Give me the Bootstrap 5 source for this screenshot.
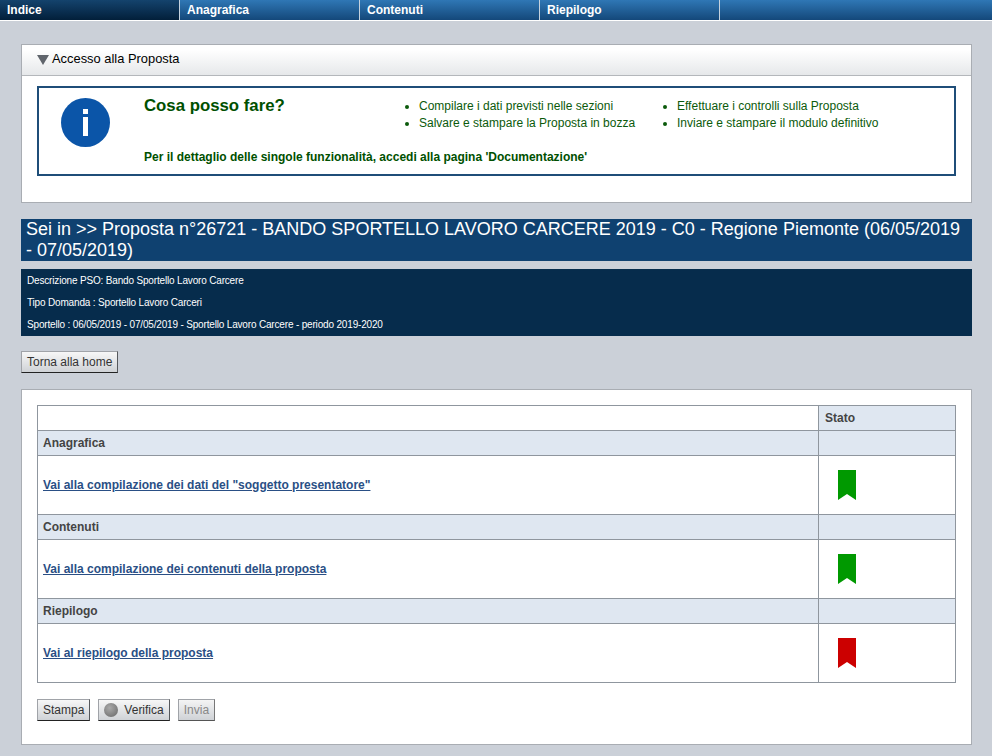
<!DOCTYPE html>
<html lang="it">
<head>
  <meta charset="UTF-8">
  <title>Indice</title>
  <link href="https://cdn.jsdelivr.net/npm/bootstrap@5.3.3/dist/css/bootstrap.min.css" rel="stylesheet">
  <style>
    body {
      background-color: #cbd0d8;
      font-family: "Liberation Sans", Arial, sans-serif;
      font-size: 12px;
      color: #333;
    }
    .top-menu {
      height: 21px;
      border-bottom: 1px solid #fff;
      background: linear-gradient(#2f77b5, #14487a);
    }
    .top-item {
      width: 180px;
      height: 20px;
      padding: 2px 0 0 7px;
      border-right: 1px solid #c5d2de;
      color: #fff;
      font-size: 12px;
      font-weight: 700;
      line-height: 16px;
      text-decoration: none;
    }
    .top-item.current {
      background: linear-gradient(#14436d, #021f3a);
    }
    .page-wrap {
      padding: 23px 20px 0 21px;
    }
    .white-panel {
      background: #fff;
      border: 1px solid #a9adb3;
      border-radius: 0;
    }
    .panel-head {
      height: 31px;
      padding: 0 15px 1px;
      border-bottom: 1px solid #b4b7bb;
      background: linear-gradient(#fff 15%, #e6e8ea);
      color: #000;
      font-size: 12.9px;
      line-height: 1;
    }
    .head-arrow {
      width: 12px;
      height: 10px;
      margin-right: 3px;
      fill: #60656c;
    }
    .info-box {
      height: 90px;
      margin: 10px 15px 26px;
      border: 2px solid #1f4e79;
      color: #0b5a0b;
    }
    .info-icon {
      width: 49px;
      height: 49px;
      margin: 10px 0 0 22px;
    }
    .info-body {
      margin-left: 34px;
      padding-top: 8px;
    }
    .info-title {
      width: 260px;
      height: 43px;
      margin: 0;
      color: #005000;
      font-size: 16.8px;
      font-weight: 700;
      line-height: 19px;
    }
    .info-list {
      margin: 2px 0 0;
      padding-left: 0;
      line-height: 17px;
      list-style: none;
    }
    .info-list li {
      position: relative;
      padding-left: 15px;
    }
    .info-list li::before {
      content: "";
      position: absolute;
      top: 7px;
      left: 1px;
      width: 4px;
      height: 4px;
      border-radius: 50%;
      background: #0b5a0b;
    }
    .list-one {
      width: 258px;
    }
    .info-note {
      margin: 9px 0 0;
      color: #005000;
      font-weight: 700;
    }
    .where-bar {
      margin-top: 16px;
      padding: 0 5px;
      background: #0f4170;
      color: #fff;
      font-size: 18px;
      line-height: 21px;
    }
    .detail-box {
      height: 67px;
      margin-top: 8px;
      padding: 5px 6px 0;
      background: #062c4c;
      color: #fff;
      font-size: 10px;
      letter-spacing: -.17px;
    }
    .detail-box p {
      height: 22px;
      margin: 0;
      line-height: 14px;
    }
    .plain-btn {
      height: 22px;
      padding: 0 5px;
      border: 1px solid #a0a3a8;
      border-right-color: #55585c;
      border-bottom-color: #222;
      border-radius: 0;
      background: linear-gradient(#f7f7f7, #cfd2d6);
      color: #333;
      font-size: 12px;
      line-height: 18px;
    }
    .plain-btn:disabled {
      border-color: #a0a3a8;
      border-right-color: #777;
      border-bottom-color: #555;
      background: linear-gradient(#f4f4f4, #cfd2d6);
      color: #888;
      opacity: 1;
    }
    .home-row {
      margin: 15px 0 16px;
    }
    .status-table {
      width: 919px;
      margin: 15px 15px 16px;
      border-collapse: collapse;
      table-layout: fixed;
    }
    .status-table td,
    .status-table th {
      padding: 0 5px;
      border: 1px solid #8f969e;
      color: #444;
      font-size: 12px;
      vertical-align: middle;
    }
    .status-table .col-stato {
      width: 137px;
      padding-left: 6px;
    }
    .status-table .head-row {
      height: 25px;
    }
    .status-table .head-row th:last-child,
    .status-table .group-row td {
      background: #dfe7f1;
    }
    .status-table .group-row {
      height: 25px;
    }
    .status-table .group-row td {
      font-weight: 700;
    }
    .status-table .link-row {
      height: 59px;
    }
    .status-table a {
      color: #2a4f85;
      font-weight: 700;
    }
    .flag-icon {
      display: block;
      width: 18px;
      height: 30px;
      margin-left: 14px;
    }
    .action-row {
      margin: 0 15px 23px;
    }
    .grey-dot {
      display: inline-block;
      width: 14px;
      height: 14px;
      margin-right: 6px;
      border-radius: 50%;
      background: radial-gradient(circle at 40% 35%, #aaa, #666);
      vertical-align: -3px;
    }
  </style>
</head>
<body>

  <nav class="top-menu d-flex">
    <a class="top-item current" href="#">Indice</a>
    <a class="top-item" href="#">Anagrafica</a>
    <a class="top-item" href="#">Contenuti</a>
    <a class="top-item" href="#">Riepilogo</a>
  </nav>

  <div class="page-wrap">
    <section class="white-panel">
      <div class="panel-head d-flex align-items-center">
        <svg class="head-arrow" viewBox="0 0 12 10"><path d="M0 0H12L6 10Z"/></svg>
        Accesso alla Proposta
      </div>
      <div class="info-box d-flex">
        <svg class="info-icon flex-shrink-0" viewBox="0 0 49 49">
          <circle cx="24.5" cy="24.5" r="24.5" fill="#0b55a8"/>
          <rect x="22" y="11" width="5" height="5" fill="#fff"/>
          <rect x="22" y="19" width="5" height="19" fill="#fff"/>
        </svg>
        <div class="info-body">
          <div class="d-flex">
            <h2 class="info-title">Cosa posso fare?</h2>
            <ul class="info-list list-one">
              <li>Compilare i dati previsti nelle sezioni</li>
              <li>Salvare e stampare la Proposta in bozza</li>
            </ul>
            <ul class="info-list">
              <li>Effettuare i controlli sulla Proposta</li>
              <li>Inviare e stampare il modulo definitivo</li>
            </ul>
          </div>
          <p class="info-note">Per il dettaglio delle singole funzionalità, accedi alla pagina 'Documentazione'</p>
        </div>
      </div>
    </section>

    <div class="where-bar">Sei in &gt;&gt; Proposta n°26721 - BANDO SPORTELLO LAVORO CARCERE 2019 - C0 - Regione Piemonte (06/05/2019 - 07/05/2019)</div>

    <div class="detail-box">
      <p>Descrizione PSO: Bando Sportello Lavoro Carcere</p>
      <p>Tipo Domanda : Sportello Lavoro Carceri</p>
      <p>Sportello : 06/05/2019 - 07/05/2019 - Sportello Lavoro Carcere - periodo 2019-2020</p>
    </div>

    <div class="home-row">
      <button type="button" class="plain-btn">Torna alla home</button>
    </div>

    <section class="white-panel">
      <table class="status-table">
        <tr class="head-row">
          <th></th>
          <th class="col-stato">Stato</th>
        </tr>
        <tr class="group-row"><td>Anagrafica</td><td></td></tr>
        <tr class="link-row">
          <td><a href="#">Vai alla compilazione dei dati del "soggetto presentatore"</a></td>
          <td><svg class="flag-icon" viewBox="0 0 18 30"><path d="M0 0H18V30L9 24L0 30Z" fill="#009900"/></svg></td>
        </tr>
        <tr class="group-row"><td>Contenuti</td><td></td></tr>
        <tr class="link-row">
          <td><a href="#">Vai alla compilazione dei contenuti della proposta</a></td>
          <td><svg class="flag-icon" viewBox="0 0 18 30"><path d="M0 0H18V30L9 24L0 30Z" fill="#009900"/></svg></td>
        </tr>
        <tr class="group-row"><td>Riepilogo</td><td></td></tr>
        <tr class="link-row">
          <td><a href="#">Vai al riepilogo della proposta</a></td>
          <td><svg class="flag-icon" viewBox="0 0 18 30"><path d="M0 0H18V30L9 24L0 30Z" fill="#cc0000"/></svg></td>
        </tr>
      </table>
      <div class="action-row d-flex gap-2">
        <button type="button" class="plain-btn">Stampa</button>
        <button type="button" class="plain-btn"><span class="grey-dot"></span>Verifica</button>
        <button type="button" class="plain-btn" disabled>Invia</button>
      </div>
    </section>
  </div>

  <script src="https://cdn.jsdelivr.net/npm/bootstrap@5.3.3/dist/js/bootstrap.bundle.min.js"></script>
</body>
</html>
